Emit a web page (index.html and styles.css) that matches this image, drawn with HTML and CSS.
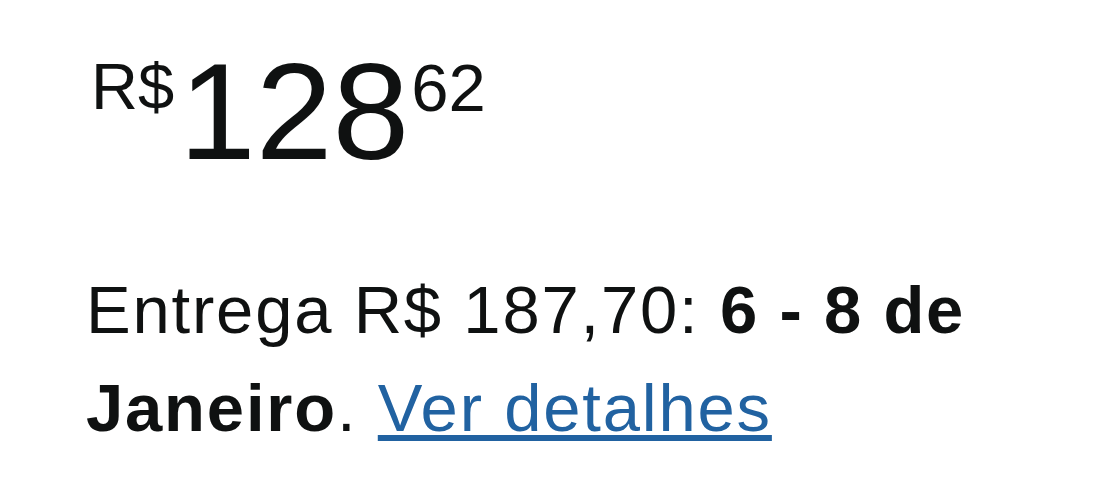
FILE: index.html
```html
<html lang="pt-BR">
<head>
    <meta charset="UTF-8">
    <title>Preço</title>
    <link rel="stylesheet" href="styles.css">
</head>
<body>
  <div class="buybox">
    <div class="price">
      <span class="price-symbol">R$</span>
      <span class="price-whole">128</span>
      <span class="price-fraction">62</span>
    </div>
    <p class="delivery">Entrega R$ 187,70: <b>6 - 8 de Janeiro</b>. <a href="#" class="details-link">Ver detalhes</a></p>
  </div>
</body>
</html>
```

FILE: styles.css
```css
* {
	box-sizing: border-box;
}
body {
	margin: 0;
	background: #fff;
	color: #0f1111;
	font-family: "Liberation Sans", Arial, sans-serif;
}
.buybox {
	padding: 42px 0 0 86px;
	width: 1000px;
}
.price {
	display: flex;
	align-items: flex-start;
	margin-left: 5px;
}
.price-symbol {
	font-size: 65px;
	line-height: 1;
	margin-top: 12px;
}
.price-whole {
	font-size: 138px;
	line-height: 1;
	margin-left: 5px;
}
.price-fraction {
	font-size: 67px;
	line-height: 1;
	margin-top: 12px;
	margin-left: 2px;
}
.delivery {
	margin: 81px 0 0;
	font-size: 67px;
	line-height: 98px;
	letter-spacing: 1.8px;
}
.details-link {
	color: #2162a1;
	text-decoration: underline;
}
```
